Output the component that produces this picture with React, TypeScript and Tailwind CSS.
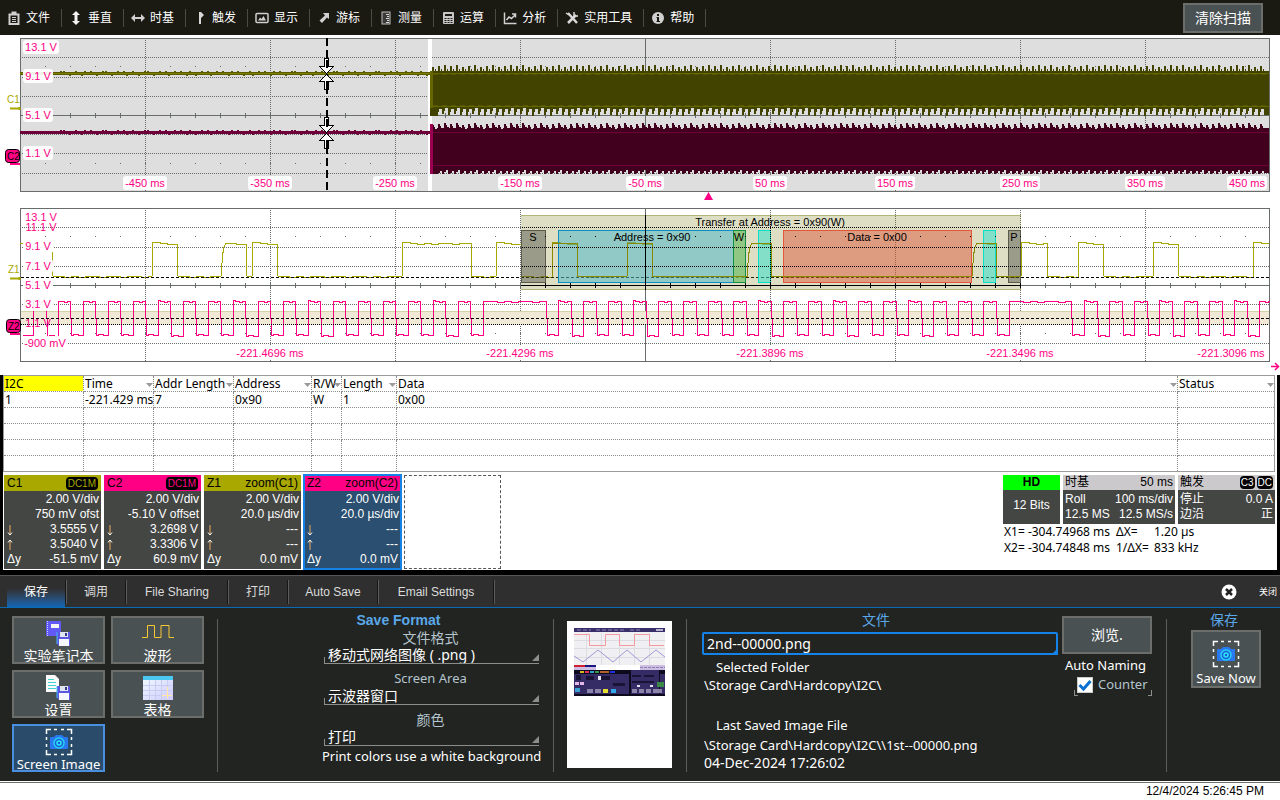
import { useState } from "react";
import type { ReactNode } from "react";

const UI_FONT = "font-['Noto_Sans','Noto_Sans_CJK_SC',sans-serif]";
const ARIAL = "font-['Liberation_Sans','Noto_Sans_CJK_SC',sans-serif]";

const PINK = "#ff0084";
const OLIVE = "#a8a800";
const GRID = "#686c6a";

/* ---------- toolbar ---------- */

const menuIcons: Record<string, ReactNode> = {
    file: (
        <>
            <path d="M1.5 3.5h9v9.5h-9z" fill="none" stroke="#d0d0d0" strokeWidth="2" />
            <path d="M3.5 0.5h5v3h-5z" fill="#d0d0d0" />
            <path d="M4 6.5h4M4 8.5h4M4 10.5h4" stroke="#d0d0d0" />
        </>
    ),
    vertical: <path d="M6 0l4 4H7.500v6H10l-4 4-4-4h2.500V4H2z" fill="#f4f4f4" />,
    horizontal: <path d="M-1 7l4-4v3h6V3l4 4-4 4V8H3v3z" fill="#d0d0d0" />,
    trigger: <path d="M5 1h2l3 3-3 3v6H5z" fill="#d8d8d8" />,
    display: (
        <>
            <rect x="0" y="2.500" width="12" height="9" rx="1" fill="none" stroke="#d0d0d0" strokeWidth="1.500" />
            <path d="M2 9.500l2-3 1.500 1.500L7.500 5l2.500 4.500z" fill="#d0d0d0" />
        </>
    ),
    cursor: <path d="M11 2v6L9 6.500 4 12l-2.500-2.500L7 4.500 5 2z" fill="#d0d0d0" />,
    measure: (
        <>
            <rect x="2" y="1" width="8" height="12" fill="#3a3a38" stroke="#bdbdbd" />
            <path d="M6 3.500h3M7 5.500h2M6 7.500h3M7 9.500h2M6 11.500h3" stroke="#d8d8d8" />
        </>
    ),
    math: (
        <>
            <rect x="1" y="1" width="11" height="12" rx="1" fill="#c8c8c8" />
            <path d="M3 3h7v2H3z" fill="#1a1912" />
            <path d="M2.500 7.500h2M5.500 7.500h2M8.500 7.500h2M2.500 9.500h2M5.500 9.500h2M8.500 9.500h2M2.500 11.500h2M5.500 11.500h2M8.500 11.500h2" stroke="#1a1912" />
        </>
    ),
    analysis: (
        <path
            d="M0.500 1.500v11h12M2.500 9l2.500-3 2.500 1.500L11 4M8 3h3.500v3.500"
            fill="none"
            stroke="#d0d0d0"
            strokeWidth="1.500"
        />
    ),
    tools: (
        <>
            <path d="M2 2l9 10M2 12l8-8" stroke="#d8d8d8" strokeWidth="2.500" />
            <path d="M8 1v4h4M0 2l3 2" fill="none" stroke="#d8d8d8" strokeWidth="1.500" />
        </>
    ),
    help: (
        <>
            <circle cx="6" cy="7" r="6" fill="#d0d0d0" />
            <path d="M5 3h2v2H5zM4.500 6H7v4h1v1H4.500v-1H5V7h-.500z" fill="#1a1912" />
        </>
    ),
};

const menuItems = [
    { icon: "file", label: "文件" },
    { icon: "vertical", label: "垂直" },
    { icon: "horizontal", label: "时基" },
    { icon: "trigger", label: "触发" },
    { icon: "display", label: "显示" },
    { icon: "cursor", label: "游标" },
    { icon: "measure", label: "测量" },
    { icon: "math", label: "运算" },
    { icon: "analysis", label: "分析" },
    { icon: "tools", label: "实用工具" },
    { icon: "help", label: "帮助" },
];

const MenuBar = () => (
    <header className="flex h-[35px] items-center bg-[#1a1912] pr-[17px] text-xs text-white">
        <nav className="flex items-center">
            {menuItems.map((item) => (
                <button
                    key={item.label}
                    className="flex h-[18px] items-center gap-1.5 border-r border-[#4a4a46] pr-[11px] pl-2 whitespace-nowrap"
                >
                    <svg width="12" height="14" viewBox="0 0 12 14" className="overflow-visible">
                        {menuIcons[item.icon]}
                    </svg>
                    {item.label}
                </button>
            ))}
        </nav>
        <button className="ml-auto h-[30px] w-20 border-2 border-[#6c6e6c] bg-[#4a5153] text-sm leading-none">
            清除扫描
        </button>
    </header>
);

/* ---------- waveform grids ---------- */

const columns = [145.5, 270.5, 395.5, 520.5, 770.5, 895.5, 1020.5, 1145.5];
const ticks = Array.from({ length: 49 }, (_, i) => 45.5 + i * 25);

// small repeatable noise so the traces do not look ruled
const jitter = (i: number) => ((i * 7919 + 13) % 11) % 3;

const range = (from: number, to: number, step: number) => {
    const out: number[] = [];
    for (let x = from; x < to; x += step) out.push(x);
    return out;
};

const Grid = ({ top, fill }: { top: number; fill: string }) => {
    const mid = top + 77;
    return (
        <g shapeRendering="crispEdges" stroke={GRID}>
            <rect x="20.5" y={top} width="1249" height="153" fill={fill} />
            {columns.map((x) => (
                <line key={x} x1={x} x2={x} y1={top - 0.5} y2={top + 153} strokeDasharray="1 1" />
            ))}
            {[19, 39, 58, 96, 115, 135].map((dy) => (
                <line key={dy} x1="20" x2="1269" y1={top + dy} y2={top + dy} strokeDasharray="1 1" />
            ))}
            <line x1="20" x2="1269" y1={mid} y2={mid} />
            <line x1="645.5" x2="645.5" y1={top} y2={top + 153} />
            {ticks.map((x) => (
                <path key={x} d={`M${x} ${mid - 2.5}v5M${x} ${top + 27.5}v1M${x} ${top + 124.5}v1`} />
            ))}
        </g>
    );
};

const Label = ({ x, y, w, children }: { x: number; y: number; w: number; children: string }) => (
    <g>
        <rect x={x - w / 2 - 2} y={y - 11} width={w + 4} height="14" rx="3" fill="#fff" fillOpacity="0.92" />
        <text x={x} y={y} textAnchor="middle" fill={PINK}>
            {children}
        </text>
    </g>
);

const CursorArrows = ({ y }: { y: number }) => (
    <g fill="#fff" stroke="#000" shapeRendering="crispEdges">
        <path d={`M324.500 ${y - 15}h4v8h5l-7 7-7-7h5z`} />
        <path d={`M324.500 ${y + 16}h4v-8h5l-7-7-7 7h5z`} />
        <path d={`M327 ${y - 14}v8M327 ${y + 7}v8`} strokeWidth="2" />
    </g>
);

const c1Burst =
    "M430 115V71" +
    range(432, 1264, 6)
        .map((x, i) => `H${x}V${64.5 + jitter(i)}h2V71h1v-2h1v2`)
        .join("") +
    "H1269V115" +
    range(6, 834, 6)
        .map((x, i) => `H${1270 - x}V${108 + jitter(i) / 2}h-3v3h-1V${114 + jitter(i)}`)
        .join("") +
    "H430Z";

const c2Burst =
    "M430 173V124" +
    range(432, 1264, 6)
        .map((x, i) => `H${x}V${123 + jitter(i)}h2v2h1v2h2V128`)
        .join("") +
    "H1269V173" +
    range(6, 834, 6)
        .map((x, i) => `H${1270 - x}V${170 + jitter(i) / 2}h-2v2h-2V174`)
        .join("") +
    "H430Z";

const speckle = (y: number) =>
    range(60, 428, 3)
        .filter((_, i) => (i * 31) % 7 < 4)
        .map((x, i) => `M${x} ${y + (jitter(i) ? 0 : 4)}h2`)
        .join("");

const RollGrid = () => (
    <g>
        <Grid top={38.5} fill="#dedede" />
        <rect x="428" y="39" width="4" height="152" fill="#fff" />
        <g shapeRendering="crispEdges">
            <rect x="20" y="72" width="410" height="3" fill="#5a5a00" />
            <path d="M20 73.500H430" stroke="#808000" />
            <path d={speckle(71.5)} stroke="#5a5a00" />
            <rect x="20" y="131" width="410" height="3" fill="#6e0039" />
            <path d={speckle(130.5)} stroke="#6e0039" />
            <path d={c1Burst} fill="#434300" />
            <path d={c2Burst} fill="#42001f" />
            <path d="M433 73.500H1269M433 106.500H1269" stroke="#666600" />
            <path d="M433 74.500H1269M433 105.500H1269" stroke="#575700" strokeDasharray="5 4" />
            <path d="M433 132.500H1269M433 165.500H1269" stroke="#700038" />
            <rect x="430" y="71" width="3" height="37" fill="#666600" />
            <rect x="430" y="124" width="3" height="50" fill="#99004f" />
            <path d="M327 38V191" stroke="#000" strokeWidth="2" strokeDasharray="8 4" />
        </g>
        <CursorArrows y={73.5} />
        <CursorArrows y={132.5} />
        <Label x={41} y={51} w={32}>13.1 V</Label>
        <Label x={38} y={80} w={26}>9.1 V</Label>
        <Label x={38} y={119} w={26}>5.1 V</Label>
        <Label x={38} y={157} w={26}>1.1 V</Label>
        <Label x={145} y={187} w={40}>-450 ms</Label>
        <Label x={270} y={187} w={40}>-350 ms</Label>
        <Label x={395} y={187} w={40}>-250 ms</Label>
        <Label x={520} y={187} w={40}>-150 ms</Label>
        <Label x={645} y={187} w={34}>-50 ms</Label>
        <Label x={770} y={187} w={30}>50 ms</Label>
        <Label x={895} y={187} w={36}>150 ms</Label>
        <Label x={1020} y={187} w={36}>250 ms</Label>
        <Label x={1145} y={187} w={36}>350 ms</Label>
        <Label x={1247} y={187} w={36}>450 ms</Label>
        <path d="M704 200l4.500-8 4.500 8z" fill={PINK} />
        <text x="7" y="103" fill={OLIVE} fontSize="10">C1</text>
        <path d="M10 108.500h10M19.500 107v3" stroke={OLIVE} strokeWidth="2" />
        <rect x="5.500" y="149.500" width="14" height="13" rx="3" fill={PINK} stroke="#000" />
        <text x="7" y="160" fontSize="10">C2</text>
        <path d="M10 164h10" stroke={PINK} strokeWidth="2" />
    </g>
);

const DATA_LOW = 276;
const DATA_HIGH = 243;

const pulses: [number, number, boolean?][] = [
    [152, 177],
    [221, 246, true],
    [252, 277],
    [402, 471],
    [496, 521],
    [552, 577],
    [627, 652],
    [747, 771, true],
    [972, 996, true],
    [1021, 1047],
    [1078, 1103],
    [1153, 1178],
    [1253, 1269],
];

const wobble = (from: number, to: number, y: number) =>
    range(from + 4, to - 3, 7)
        .map((x, i) => `H${x}V${y + (jitter(i) === 1 ? 1 : 0)}`)
        .join("");

const dataPath = () => {
    let d = `M52 252V272L53 ${DATA_LOW}`;
    let last = 53;
    pulses.forEach(([up, down, slow]) => {
        d += wobble(last, up, DATA_LOW) + `H${up}`;
        d += slow ? `C${up + 2} 250 ${up + 2} 245 ${up + 6} ${DATA_HIGH}` : `L${up + 1} ${DATA_HIGH - 1}h3`;
        d += wobble(up + 4, down, DATA_HIGH) + `H${down}`;
        if (down < 1269) d += `L${down + 1} ${DATA_LOW}`;
        last = down + 1;
    });
    return d;
};

const clockHighs: [number, number][] = [
    [33, 46],
    ...range(58, 460, 25).map((x) => [x, x + 12] as [number, number]),
    [483, 546],
    ...range(558, 1000, 25).map((x) => [x, x + 13] as [number, number]),
    [1009, 1071],
    ...range(1084, 1250, 25).map((x) => [x, x + 13] as [number, number]),
    [1259, 1269],
];

const clockPath =
    "M22 335" +
    clockHighs
        .map(([up, down], i) => {
            const j = jitter(i) > 1 ? 1 : 0;
            const top = down - up > 20 ? wobble(up + 3, down, 301) : "h4v1h3v-1";
            const fall = down < 1269 ? `V318h1V${335 + j}h2v-1h5v1` : "";
            return `H${up}V${301 - j}h2V301${top}H${down}${fall}`;
        })
        .join("");

const ZoomGrid = () => (
    <g>
        <Grid top={208.5} fill="#fff" />
        <g shapeRendering="crispEdges">
            <rect x="21" y="312" width="1248" height="13" fill="#efe9d6" />
            <path d="M21 311.500H1269" stroke="#d6d2a8" />
            <path d={clockPath} transform="translate(0.5 0.5)" fill="none" stroke={PINK} />
            <path d="M21 318.500H1269" stroke="#000" strokeDasharray="3 2" />
            <path d="M21 324.500H1269" stroke="#000" strokeDasharray="1 1" />
            <path d={dataPath()} fill="none" stroke={OLIVE} />
            <path d="M20 243.500h4" stroke={OLIVE} />
            <path d="M21 277.500H1269" stroke="#000" strokeDasharray="3 2" />

            <rect x="521" y="215" width="500" height="75" fill="#7f7f20" fillOpacity="0.26" />
            <path d="M521 215.500h500M521 289.500h500" stroke="#b4b47a" />
            <rect x="521.5" y="230.5" width="24" height="52" fill="#4a4a40" fillOpacity="0.45" stroke="#5a5a4a" />
            <rect x="558.5" y="230.5" width="187" height="52" fill="#44b4c8" fillOpacity="0.5" stroke="#0e8fc4" />
            <rect x="733.5" y="230.5" width="12" height="52" fill="#90c840" fillOpacity="0.5" stroke="#129048" />
            <rect x="758.5" y="230.5" width="12" height="52" fill="#28e0cc" fillOpacity="0.5" stroke="#0ae0c8" />
            <rect x="783.5" y="230.5" width="188" height="52" fill="#dc583c" fillOpacity="0.5" stroke="#e2583c" />
            <rect x="983.5" y="230.5" width="12" height="52" fill="#28e0cc" fillOpacity="0.5" stroke="#0ae0c8" />
            <rect x="1008.5" y="230.5" width="12" height="52" fill="#4a4a40" fillOpacity="0.45" stroke="#5a5a4a" />
            <path
                d="M552 276l1-33h24l1 33h49l1-33h24l1 33h94M747 276c2-26 2-31 6-33h18l1 33h200c2-26 2-31 6-33h18l1 33h24"
                fill="none"
                stroke="#8a8a00"
            />
            <g stroke="#000">
                <path d="M522 227.500h499M522 247.500h499M522 266.500h499M770.500 216v74" strokeDasharray="1 1" />
                <path d="M521 285.500h500M645.500 215v75" />
                {ticks
                    .filter((x) => x > 521 && x < 1021)
                    .map((x) => (
                        <path key={x} d={`M${x} 283v5M${x} 236v1`} />
                    ))}
            </g>
        </g>
        <g fill="#000" textAnchor="middle">
            <text x="770" y="226">Transfer at Address = 0x90(W)</text>
            <text x="652" y="241">Address = 0x90</text>
            <text x="877" y="241">Data = 0x00</text>
            <text x="533" y="241">S</text>
            <text x="739" y="241">W</text>
            <text x="1014" y="241">P</text>
        </g>
        <text x="41" y="221" textAnchor="middle" fill={PINK}>13.1 V</text>
        <text x="41" y="231" textAnchor="middle" fill={PINK}>11.1 V</text>
        <Label x={38} y={250} w={26}>9.1 V</Label>
        <Label x={38} y={270} w={26}>7.1 V</Label>
        <Label x={38} y={289} w={26}>5.1 V</Label>
        <Label x={38} y={308} w={26}>3.1 V</Label>
        <text x="38" y="327" textAnchor="middle" fill={PINK}>1.1 V</text>
        <Label x={45} y={347} w={40}>-900 mV</Label>
        <Label x={270} y={357} w={66}>-221.4696 ms</Label>
        <Label x={520} y={357} w={66}>-221.4296 ms</Label>
        <Label x={770} y={357} w={66}>-221.3896 ms</Label>
        <Label x={1020} y={357} w={66}>-221.3496 ms</Label>
        <Label x={1231} y={357} w={66}>-221.3096 ms</Label>
        <path d="M1271 366.500h7M1275 363l3.500 3.500-3.500 3.500" fill="none" stroke={PINK} strokeWidth="1.500" />
        <text x="8" y="273" fill={OLIVE} fontSize="10">Z1</text>
        <path d="M10 278.500h10M19.500 277v3" stroke={OLIVE} strokeWidth="2" />
        <rect x="6.500" y="319.500" width="14" height="13" rx="3" fill={PINK} stroke="#000" />
        <text x="8" y="330" fontSize="10">Z2</text>
        <path d="M10 334h10" stroke={PINK} strokeWidth="2" />
    </g>
);

const Waveforms = () => (
    <svg viewBox="0 35 1280 340" className={`block h-auto w-full bg-white text-[11px] ${ARIAL}`}>
        <RollGrid />
        <ZoomGrid />
    </svg>
);

/* ---------- decode table ---------- */

const decodeColumns = [
    { name: "I2C", width: "w-[80px]", value: "1" },
    { name: "Time", width: "w-[70px]", value: "-221.429 ms" },
    { name: "Addr Length", width: "w-[80px]", value: "7" },
    { name: "Address", width: "w-[78px]", value: "0x90" },
    { name: "R/W", width: "w-[30px]", value: "W" },
    { name: "Length", width: "w-[55px]", value: "1" },
    { name: "Data", width: "", value: "0x00" },
    { name: "Status", width: "w-[97px]", value: "" },
];

const DecodeTable = () => (
    <table className="w-full table-fixed border-collapse border border-[#9a9a9a] text-xs leading-[15px]">
        <thead>
            <tr className="h-4">
                {decodeColumns.map((col, i) => (
                    <th
                        key={col.name}
                        className={`relative h-4 overflow-hidden border border-dotted border-[#8c8c8c] p-0 px-px text-left font-normal whitespace-nowrap ${col.width} ${i === 0 ? "bg-[#ffff00]" : ""}`}
                    >
                        {col.name}
                        {i > 0 && (
                            <svg width="7" height="4" className="absolute right-0 bottom-1">
                                <path d="M0 0h7L3.500 4z" fill="#9a9a9a" />
                            </svg>
                        )}
                    </th>
                ))}
            </tr>
        </thead>
        <tbody>
            {[0, 1, 2, 3, 4].map((row) => (
                <tr key={row} className="h-4">
                    {decodeColumns.map((col) => (
                        <td
                            key={col.name}
                            className="h-4 overflow-hidden border border-dotted border-[#8c8c8c] p-0 px-px whitespace-nowrap"
                        >
                            {row === 0 ? col.value : ""}
                        </td>
                    ))}
                </tr>
            ))}
        </tbody>
    </table>
);

/* ---------- descriptor boxes ---------- */

interface ChannelProps {
    name: string;
    tag?: string;
    source?: string;
    head: string;
    tagColor?: string;
    scale: string;
    offset: string;
    values: string[];
    selected?: boolean;
}

const channels: ChannelProps[] = [
    { name: "C1", tag: "DC1M", head: "bg-[#a8a800]", tagColor: "text-[#a8a800]", scale: "2.00 V/div", offset: "750 mV ofst", values: ["3.5555 V", "3.5040 V", "-51.5 mV"] },
    { name: "C2", tag: "DC1M", head: "bg-[#ff0084]", tagColor: "text-[#ff0084]", scale: "2.00 V/div", offset: "-5.10 V offset", values: ["3.2698 V", "3.3306 V", "60.9 mV"] },
    { name: "Z1", source: "zoom(C1)", head: "bg-[#a8a800]", scale: "2.00 V/div", offset: "20.0 µs/div", values: ["---", "---", "0.0 mV"] },
    { name: "Z2", source: "zoom(C2)", head: "bg-[#ff0084]", scale: "2.00 V/div", offset: "20.0 µs/div", values: ["---", "---", "0.0 mV"], selected: true },
];

const Arrow = ({ up }: { up?: boolean }) => (
    <svg width="6" height="12" viewBox="0 0 6 12" className="mt-0.5">
        <path d="M3 1v10" stroke="#e8a860" />
        <path d={up ? "M1 3.500L3 1l2 2.500" : "M1 8.500L3 11l2-2.500"} fill="none" stroke="#fff" />
    </svg>
);

const ChannelBox = ({ name, tag, source, head, tagColor, scale, offset, values, selected }: ChannelProps) => (
    <button
        className={`flex h-[94px] w-[97px] flex-col text-right text-xs leading-[15px] text-white ${
            selected ? "bg-[#2a4f70] outline-2 -outline-offset-1 outline-[#1482e6]" : "bg-[#444644]"
        }`}
    >
        <span className={`mb-px flex h-4 w-full items-center justify-between px-[3px] text-black ${head}`}>
            {name}
            {tag && <span className={`rounded-sm bg-black px-0.5 text-[10px] leading-[13px] ${tagColor}`}>{tag}</span>}
            {source && <span>{source}</span>}
        </span>
        <span className="w-full px-0.5">{scale}</span>
        <span className="w-full px-0.5">{offset}</span>
        <span className="flex w-full justify-between px-[3px]">
            <Arrow />
            {values[0]}
        </span>
        <span className="flex w-full justify-between px-[3px]">
            <Arrow up />
            {values[1]}
        </span>
        <span className="flex w-full justify-between px-[3px]">
            <span>Δy</span>
            {values[2]}
        </span>
    </button>
);

const Descriptors = () => (
    <div className={`flex gap-[3px] pt-[3px] pb-px pl-px ${ARIAL}`}>
        {channels.map((channel) => (
            <ChannelBox key={channel.name} {...channel} />
        ))}
        <div className="h-[94px] w-[97px] border border-dashed border-[#555]" />
        <div className="ml-auto flex w-[272px] flex-col text-xs">
            <div className="flex h-[49px] gap-[3px] leading-[15px] text-white">
                <div className="flex w-[57px] flex-col bg-[#444644] text-center">
                    <span className="bg-[#00ff00] font-bold text-black">HD</span>
                    <span className="pt-2">12 Bits</span>
                </div>
                <div className="flex w-[112px] flex-col bg-[#444644]">
                    <div className="mb-0.5 flex justify-between bg-[#ccc9cc] px-0.5 text-black">
                        <span>时基</span>
                        <span>50 ms</span>
                    </div>
                    <div className="flex justify-between px-0.5">
                        <span>Roll</span>
                        <span>100 ms/div</span>
                    </div>
                    <div className="flex justify-between px-0.5">
                        <span>12.5 MS</span>
                        <span>12.5 MS/s</span>
                    </div>
                </div>
                <div className="flex flex-1 flex-col bg-[#444644]">
                    <div className="mb-0.5 flex items-center bg-[#ccc9cc] px-0.5 text-black">
                        <span>触发</span>
                        <span className="ml-auto rounded-sm bg-black px-px text-[10px] leading-[13px] text-white">C3</span>
                        <span className="ml-0.5 rounded-sm bg-black px-px text-[10px] leading-[13px] text-white">DC</span>
                    </div>
                    <div className="flex justify-between px-0.5">
                        <span>停止</span>
                        <span>0.0 A</span>
                    </div>
                    <div className="flex justify-between px-0.5">
                        <span>边沿</span>
                        <span>正</span>
                    </div>
                </div>
            </div>
            <div className={`grid grid-cols-[112px_38px_auto] pl-px leading-4 ${UI_FONT}`}>
                <span className="whitespace-nowrap">X1= -304.74968 ms</span>
                <span>ΔX=</span>
                <span>1.20 µs</span>
                <span className="whitespace-nowrap">X2= -304.74848 ms</span>
                <span>1/ΔX=</span>
                <span>833 kHz</span>
            </div>
        </div>
    </div>
);

/* ---------- save dialog ---------- */

const tabs = [
    { label: "保存", width: "w-[60px]" },
    { label: "调用", width: "w-[60px]" },
    { label: "File Sharing", width: "w-[102px]" },
    { label: "打印", width: "w-[60px]" },
    { label: "Auto Save", width: "w-[90px]" },
    { label: "Email Settings", width: "w-[116px]" },
];

const Floppy = () => (
    <g>
        <path d="M12 12h13v14H14l-2-2z" fill="#5b57e0" />
        <path d="M15 12h8v5h-8z" fill="#dfe6f2" />
        <path d="M20 13h2v3h-2z" fill="#3a3a80" />
        <path d="M14 19h10v7H14z" fill="#f6f6ff" />
        <path d="M12 12v12" stroke="#42b8ff" />
    </g>
);

const Camera = () => (
    <svg width="28" height="28" viewBox="0 0 28 28" className="shrink-0">
        <path
            d="M1.500 6V1.500H6M22 1.500h4.500V6M26.500 22v4.500H22M6 26.500H1.500V22M9 1.500h3M16 1.500h3M9 26.500h3M16 26.500h3M1.500 9v3M1.500 16v3M26.500 9v3M26.500 16v3"
            fill="none"
            stroke="#fff"
            strokeWidth="1.500"
        />
        <path d="M5 10q0-1 1-1h3l2-2h6l2 2h3q1 0 1 1v10q0 1-1 1H6q-1 0-1-1z" fill="#2878f0" />
        <circle cx="14" cy="15" r="5" fill="#1c5cd8" stroke="#28d0f4" strokeWidth="1.500" />
        <circle cx="14" cy="15" r="2" fill="none" stroke="#28e8f4" strokeWidth="1.500" />
    </svg>
);

const saveTargets = [
    {
        label: "实验笔记本",
        size: "text-sm",
        icon: (
            <svg width="28" height="28" viewBox="0 0 28 28" className="shrink-0">
                <path d="M1 1h15v15H1z" fill="#6258f4" />
                <path d="M2.500 1v15" stroke="#c8d4ff" strokeDasharray="1 1" />
                <path d="M6 4h8v4H6z" fill="#f4f4f4" />
                <Floppy />
            </svg>
        ),
    },
    {
        label: "波形",
        size: "text-sm",
        icon: (
            <svg width="32" height="28" viewBox="0 0 32 28" className="shrink-0">
                <path d="M0 17.500h5.500v-12h7v12h6.500v-12h8v12h5" fill="none" stroke="#f8c830" />
            </svg>
        ),
    },
    {
        label: "设置",
        size: "text-sm",
        icon: (
            <svg width="28" height="28" viewBox="0 0 28 28" className="shrink-0">
                <path d="M1 1h9l4 4v13H1z" fill="#fafafa" />
                <path d="M3 5.500h6M3 8.500h8M3 11.500h8M3 14.500h8" stroke="#40d4d0" />
                <Floppy />
            </svg>
        ),
    },
    {
        label: "表格",
        size: "text-sm",
        icon: (
            <svg width="32" height="28" viewBox="0 0 32 28" className="shrink-0">
                <defs>
                    <linearGradient id="sheet" x1="0" y1="0" x2="1" y2="1">
                        <stop offset="0" stopColor="#f0fdff" />
                        <stop offset="1" stopColor="#cfc8ff" />
                    </linearGradient>
                </defs>
                <path d="M1 2h30v24H1z" fill="url(#sheet)" />
                <path d="M1 2h30v4H1z" fill="#4cc8f0" />
                <path d="M1 11.500h30M1 16.500h30M1 21.500h30M7.500 6v20M13.500 6v20M19.500 6v20M25.500 6v20" stroke="#c8ccee" />
                <path d="M25.500 13v12M20 21.500h10" stroke="#ffe9a0" />
            </svg>
        ),
    },
    { label: "Screen Image", size: "text-[13px]", icon: <Camera /> },
];

const Divider = () => <div className="mt-[11px] mb-[9px] w-px shrink-0 bg-[#5c5e5c]" />;

interface PickerProps {
    id: string;
    label: string;
    value: string;
    labelSize?: string;
}

const Picker = ({ id, label, value, labelSize = "text-sm" }: PickerProps) => (
    <div className="flex flex-col">
        <label htmlFor={id} className={`h-[18px] text-center leading-[17px] text-[#b4c4cc] ${labelSize}`}>
            {label}
        </label>
        <div className="relative ml-0.5 border-b border-[#8c8e8c]">
            <select id={id} className="block h-4 w-full appearance-none bg-transparent pl-1 text-sm leading-4 text-white outline-none">
                <option>{value}</option>
            </select>
            <span className="absolute bottom-0 left-0 h-1.5 w-px bg-[#8c8e8c]" />
            <svg width="7" height="7" className="pointer-events-none absolute right-0 bottom-0.5">
                <path d="M7 0v7H0z" fill="#8c8e8c" />
            </svg>
        </div>
    </div>
);

const Preview = () => (
    <div className="mt-[13px] mr-3.5 ml-[13px] h-[147px] w-[105px] shrink-0 bg-white pt-[7px] pl-[7px]">
        <svg width="91" height="68" viewBox="0 0 91 68">
            <rect width="91" height="38" fill="#f0f0f2" />
            <rect width="91" height="4" fill="#39306a" />
            <path d="M3 2h14M22 2h30M56 2h12" stroke="#8c86b4" strokeDasharray="4 2" />
            <path d="M82 1h7v2h-7z" fill="#b8b4d0" />
            <path d="M12.500 5v32M27.500 5v32M45.500 5v32M60.500 5v32M75.500 5v32M0 12.500h91M0 20.500h91M0 29.500h91" stroke="#dcdce2" />
            <path d="M0 6.500h15.500v11h16v-11h14v11h15v-11h15v11H90" fill="none" stroke="#f49aa0" />
            <path d="M0 28l9 6 15-12 15 12 14-12 14 12 15-12 9 7" fill="none" stroke="#a09ad8" />
            <path d="M0 37h11v2H0z" fill="#d02030" />
            <path d="M11 37h11v2H11z" fill="#181880" />
            <path d="M22 37h44v5H22z" fill="#fff" />
            <path d="M0 39h22v3H0zM66 37h25v5H66z" fill="#cdbce4" />
            <path d="M66 39.500h25" stroke="#8c84a8" strokeDasharray="3 1" />
            <rect y="42" width="91" height="26" fill="#0c0a1c" />
            <path d="M0 46h55v20H0zM57 42h28v24H57zM86 46h5v20h-5z" fill="#352c66" />
            <g strokeWidth="2">
                <path d="M6 44h4" stroke="#d8b820" />
                <path d="M11 44h4" stroke="#d83060" />
                <path d="M16 44h4" stroke="#28a0c8" />
                <path d="M21 44h4" stroke="#389848" />
                <path d="M26 44h9" stroke="#b06028" />
                <path d="M36 44h5" stroke="#2030e0" />
            </g>
            <path d="M2 47h5v5H2zM12 48h8v4h-8zM27 48h9v4h-9zM39 55h12v3H39zM58 47h9v2h-9zM70 47h10v2H70zM58 53h22v2H58z" fill="#191436" />
            <path d="M1 54h4v3H1zM6 54h4v3H6z" fill="#e8b8e8" />
            <path d="M1 60h5v4H1z" fill="#3ca0d0" />
            <path d="M13 61h6v4h-6zM21 61h6v4h-6zM58 61h5v4h-5zM65 61h5v4h-5zM72 61h5v4h-5zM79 61h9v4h-9z" fill="#8c84a8" />
            <path d="M29 61h5v4h-5z" fill="#e8e030" />
            <path d="M37 61h5v4h-5z" fill="#30a8e8" />
            <path d="M83 54h7v5h-7z" fill="#3c8848" />
            <path d="M24 48h3v4h-3zM63 57h3v2h-3zM76 57h3v2h-3z" fill="#e4e4ee" />
        </svg>
    </div>
);

const SaveDialog = () => {
    const [fileName, setFileName] = useState("2nd--00000.png");
    const [counter, setCounter] = useState(true);
    const [target, setTarget] = useState("Screen Image");

    return (
        <section className="border-t border-[#565656] bg-[#222422] text-[13px] text-white">
            <div className={`flex h-8 items-stretch border-b border-[#0a6cb4] bg-[#2f2f2f] pl-[7px] text-xs text-[#dcdcdc] ${ARIAL}`}>
                {tabs.map((tab, i) => (
                    <div key={tab.label} className={`flex items-center ${tab.width}`}>
                        <button
                            className={`flex-1 self-stretch whitespace-nowrap ${
                                i === 0 ? "bg-linear-to-t from-[#0a66b4] to-[#2f2f2f] to-60% text-white" : ""
                            }`}
                        >
                            {tab.label}
                        </button>
                        <span className="h-6 w-0.5 border-r border-[#5c5c5c] bg-[#161616]" />
                    </div>
                ))}
                <button className="ml-auto flex items-center gap-[22px] pr-[3px] text-[9px] text-white">
                    <svg width="16" height="16" viewBox="0 0 16 16">
                        <circle cx="8" cy="8" r="7.500" fill="#fff" />
                        <path d="M5 5l6 6M11 5l-6 6" stroke="#222" strokeWidth="2.500" />
                    </svg>
                    关闭
                </button>
            </div>

            <div className="flex h-[173px]">
                <div className="grid shrink-0 grid-cols-[93px_93px] content-start gap-1.5 pt-2 pr-[13px] pl-3">
                    {saveTargets.map((item) => (
                        <button
                            key={item.label}
                            onClick={() => setTarget(item.label)}
                            className={`flex h-12 flex-col items-center overflow-hidden border-2 pt-0.5 whitespace-nowrap ${item.size} ${
                                target === item.label ? "border-[#4a8ee0] bg-[#2a4c6a]" : "border-[#6c6e6c] bg-[#4a5153]"
                            }`}
                        >
                            {item.icon}
                            <span className="leading-4">{item.label}</span>
                        </button>
                    ))}
                </div>
                <Divider />

                <div className="flex w-[335px] shrink-0 flex-col pt-[5px] pr-3.5 pl-[104px]">
                    <h2 className={`mb-px pr-16 text-center text-sm leading-[15px] font-bold text-[#5aa8e8] ${ARIAL}`}>Save Format</h2>
                    <div className="flex flex-col gap-1.5">
                        <Picker id="format" label="文件格式" value="移动式网络图像 ( .png )" />
                        <Picker id="area" label="Screen Area" labelSize="text-[13px]" value="示波器窗口" />
                        <Picker id="color" label="颜色" value="打印" />
                    </div>
                    <p className="leading-5 whitespace-nowrap">Print colors use a white background</p>
                </div>
                <Divider />

                <Preview />
                <Divider />

                <div className="flex flex-1 gap-1 pr-3.5 pl-[15px]">
                    <div className="flex flex-1 flex-col pt-[3px]">
                        <label htmlFor="file" className="mb-[3px] pr-2 text-center text-sm leading-[18px] text-[#5aa8e8]">
                            文件
                        </label>
                        <div className="relative">
                            <input
                                id="file"
                                value={fileName}
                                onChange={(e) => setFileName(e.target.value)}
                                className="block h-[23px] w-full rounded-xs border-2 border-[#1482e6] bg-transparent px-[3px] text-sm outline-none"
                            />
                            <svg width="7" height="7" className="absolute right-0 bottom-0">
                                <path d="M7 0v7H0z" fill="#1482e6" />
                            </svg>
                        </div>
                        <p className="mt-[3px] pl-3.5 leading-[18px]">Selected Folder</p>
                        <p className="mb-[22px] pl-0.5 leading-[18px]">\Storage Card\Hardcopy\I2C\</p>
                        <p className="mb-[3px] pl-3.5 leading-[18px]">Last Saved Image File</p>
                        <p className="pl-0.5 leading-[17px] whitespace-nowrap">\Storage Card\Hardcopy\I2C\\1st--00000.png</p>
                        <p className="pl-0.5 text-sm leading-[17px]">04-Dec-2024 17:26:02</p>
                    </div>
                    <div className="flex w-[90px] flex-col pt-2">
                        <button className="h-[38px] border-2 border-[#6c6e6c] bg-[#4a5153] text-sm">浏览.</button>
                        <p className="mt-0.5 pl-[3px] leading-[18px] whitespace-nowrap">Auto Naming</p>
                        <label className="relative ml-3 flex h-[22px] items-center gap-[5px] pl-[3px] text-[#b4c4cc]">
                            <span className="relative flex">
                                <input
                                    type="checkbox"
                                    checked={counter}
                                    onChange={(e) => setCounter(e.target.checked)}
                                    className="peer size-4 appearance-none border border-[#ccc] bg-white"
                                />
                                <svg
                                    width="16"
                                    height="16"
                                    viewBox="0 0 16 16"
                                    className="pointer-events-none absolute inset-0 hidden peer-checked:block"
                                >
                                    <path d="M2.500 8l4 4 7-8" fill="none" stroke="#0a70d0" strokeWidth="3" />
                                </svg>
                            </span>
                            Counter
                            <span className="absolute bottom-0 left-0 h-1.5 w-1 border-b border-l border-[#8c8e8c]" />
                            <span className="absolute right-0 bottom-0 h-1.5 w-1 border-r border-b border-[#8c8e8c]" />
                        </label>
                    </div>
                </div>
                <Divider />

                <div className="flex w-[113px] shrink-0 flex-col pt-[3px] pr-[19px] pl-6">
                    <h2 className="mb-px pr-1 text-center text-sm leading-[18px] text-[#5aa8e8]">保存</h2>
                    <button className="flex h-[58px] flex-col items-center border-2 border-[#6c6e6c] bg-[#4a5153] pt-2 whitespace-nowrap">
                        <Camera />
                        <span className="leading-5">Save Now</span>
                    </button>
                </div>
            </div>
        </section>
    );
};

export default function App() {
    return (
        <div className={`flex min-h-screen flex-col bg-white text-black ${UI_FONT}`}>
            <MenuBar />
            <Waveforms />
            <section className="border-x-3 border-b-5 border-black bg-white pr-0.5">
                <DecodeTable />
                <Descriptors />
            </section>
            <SaveDialog />
            <footer className={`mt-px border-t border-[#6c6e6c] pr-4 text-right text-xs leading-4 ${ARIAL}`}>
                12/4/2024 5:26:45 PM
            </footer>
        </div>
    );
}
